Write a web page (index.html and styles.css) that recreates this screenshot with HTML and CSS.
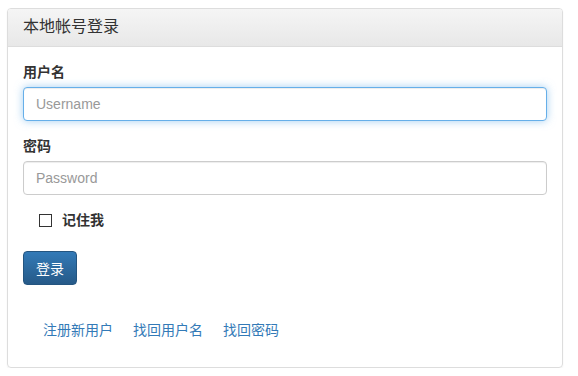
FILE: index.html
```html
<!DOCTYPE html>
<html lang="zh-CN">
<head>
    <meta charset="UTF-8">
    <title>本地帐号登录</title>
    <link rel="stylesheet" href="styles.css">
</head>
<body>
    <div class="panel">
        <div class="panel-heading">本地帐号登录</div>
        <div class="panel-body">
            <div class="form-group">
                <label class="control-label" for="username">用户名</label>
                <input type="text" id="username" class="form-control focused" placeholder="Username">
            </div>
            <div class="form-group">
                <label class="control-label" for="password">密码</label>
                <input type="password" id="password" class="form-control" placeholder="Password">
            </div>
            <div class="checkbox">
                <span class="check-box"></span>
                <span class="check-text">记住我</span>
            </div>
            <button class="btn-login">登录</button>
            <div class="links">
                <a href="#">注册新用户</a>
                <a href="#">找回用户名</a>
                <a href="#">找回密码</a>
            </div>
        </div>
    </div>
</body>
</html>
```

FILE: styles.css
```css
html, body {
    margin: 0;
    padding: 0;
    background: #fff;
}

body {
    padding: 8px 15px 0 7px;
    font-family: "Liberation Sans", "Noto Sans CJK SC", sans-serif;
    font-size: 14px;
    color: #333;
}

.panel {
    border: 1px solid #ddd;
    border-radius: 4px;
    box-shadow: 0 1px 2px rgba(0, 0, 0, .05);
}

.panel-heading {
    padding: 9px 15px 10px;
    font-size: 16px;
    line-height: 18px;
    background: linear-gradient(to bottom, #f5f5f5 0%, #e8e8e8 100%);
    border-bottom: 1px solid #ddd;
    border-radius: 3px 3px 0 0;
}

.panel-body {
    padding: 15px 15px 17px 15px;
}

.form-group {
    margin-bottom: 15px;
}

.control-label {
    display: block;
    font-weight: bold;
    line-height: 20px;
    margin-bottom: 5px;
}

.form-control {
    display: block;
    box-sizing: border-box;
    width: 100%;
    height: 34px;
    padding: 6px 12px;
    font-family: "Liberation Sans", "Noto Sans CJK SC", sans-serif;
    font-size: 14px;
    color: #555;
    border: 1px solid #ccc;
    border-radius: 4px;
    box-shadow: inset 0 1px 1px rgba(0, 0, 0, .075);
    outline: none;
}

.form-control::placeholder {
    color: #999;
}

.focused {
    border-color: #66afe9;
    box-shadow: inset 0 1px 1px rgba(0, 0, 0, .075), 0 0 8px rgba(102, 175, 233, .6);
}

.checkbox {
    display: flex;
    align-items: center;
    gap: 10px;
    padding-left: 16px;
    margin: 14px 0 21px;
    line-height: 20px;
}

.check-box {
    width: 11px;
    height: 11px;
    border: 1px solid #333;
}

.check-text {
    font-weight: bold;
}

.btn-login {
    display: block;
    width: 54px;
    height: 34px;
    padding: 0;
    font-family: "Liberation Sans", "Noto Sans CJK SC", sans-serif;
    font-size: 14px;
    color: #fff;
    background: linear-gradient(to bottom, #337ab7 0%, #265a88 100%);
    border: 1px solid #245580;
    border-radius: 4px;
}

.links {
    display: flex;
    gap: 20px;
    padding: 25px 20px 0;
    line-height: 40px;
}

.links a {
    color: #337ab7;
    text-decoration: none;
}
```
